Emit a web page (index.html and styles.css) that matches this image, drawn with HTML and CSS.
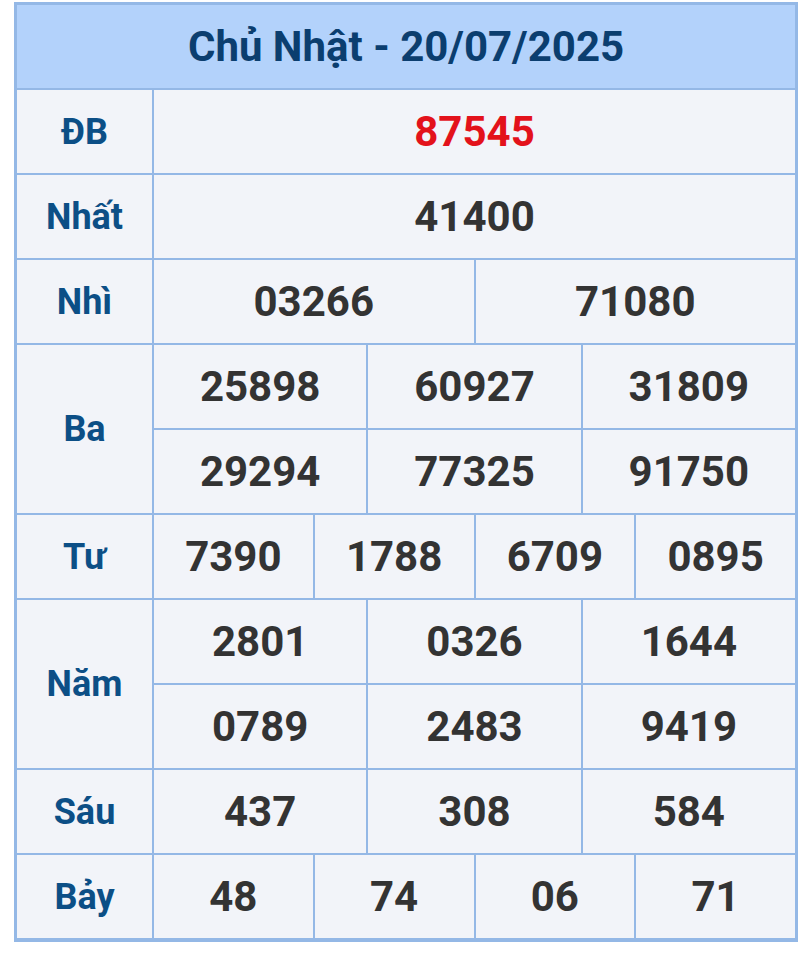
FILE: index.html
```html
<!DOCTYPE html>
<html lang="vi">
<head>
<meta charset="utf-8">
<title>Chủ Nhật - 20/07/2025</title>
<link rel="stylesheet" href="styles.css">
</head>
<body>
<div class="board">
  <div class="cell title">Chủ Nhật - 20/07/2025</div>

  <div class="cell label">ĐB</div>
  <div class="cell num s12 red">87545</div>

  <div class="cell label">Nhất</div>
  <div class="cell num s12">41400</div>

  <div class="cell label">Nhì</div>
  <div class="cell num s6">03266</div>
  <div class="cell num s6">71080</div>

  <div class="cell label r2">Ba</div>
  <div class="cell num s4">25898</div>
  <div class="cell num s4">60927</div>
  <div class="cell num s4">31809</div>
  <div class="cell num s4">29294</div>
  <div class="cell num s4">77325</div>
  <div class="cell num s4">91750</div>

  <div class="cell label">Tư</div>
  <div class="cell num s3">7390</div>
  <div class="cell num s3">1788</div>
  <div class="cell num s3">6709</div>
  <div class="cell num s3">0895</div>

  <div class="cell label r2">Năm</div>
  <div class="cell num s4">2801</div>
  <div class="cell num s4">0326</div>
  <div class="cell num s4">1644</div>
  <div class="cell num s4">0789</div>
  <div class="cell num s4">2483</div>
  <div class="cell num s4">9419</div>

  <div class="cell label">Sáu</div>
  <div class="cell num s4">437</div>
  <div class="cell num s4">308</div>
  <div class="cell num s4">584</div>

  <div class="cell label">Bảy</div>
  <div class="cell num s3">48</div>
  <div class="cell num s3">74</div>
  <div class="cell num s3">06</div>
  <div class="cell num s3">71</div>
</div>
</body>
</html>
```

FILE: styles.css
```css
html, body {
  margin: 0;
  padding: 0;
  background: #ffffff;
}

body {
  padding: 2px 0 0 14px;
  font-family: Roboto, "Liberation Sans", sans-serif;
}

.board {
  box-sizing: border-box;
  width: 784px;
  display: grid;
  grid-template-columns: 135px repeat(12, 1fr);
  grid-auto-rows: 83px;
  gap: 2px;
  padding: 3px 3px 4px 3px;
  background: #94b8e6;
}

.cell {
  display: flex;
  align-items: center;
  justify-content: center;
  background: #f2f4f9;
  font-weight: 700;
}

.title {
  grid-column: 1 / -1;
  background: #b3d2fb;
  color: #0b3e6f;
  font-size: 42px;
}

.label {
  grid-column: 1;
  color: #0c4f86;
  font-size: 36px;
}

.r2 {
  grid-row: span 2;
}

.num {
  color: #333333;
  font-size: 42px;
}

.red {
  color: #e3121b;
}

.s12 { grid-column: span 12; }
.s6 { grid-column: span 6; }
.s4 { grid-column: span 4; }
.s3 { grid-column: span 3; }
```
